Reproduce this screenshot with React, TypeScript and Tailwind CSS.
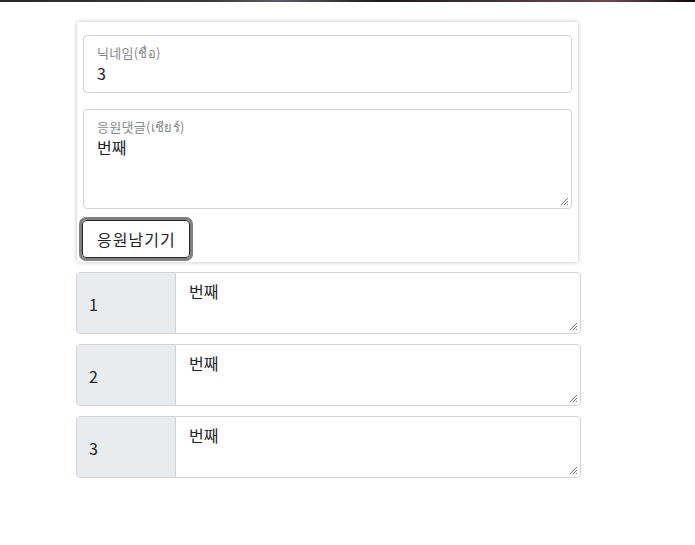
import React from 'react';

const rows = [
    { id: 1, text: '번째' },
    { id: 2, text: '번째' },
    { id: 3, text: '번째' },
];

const font = 'font-["Noto_Sans_CJK_KR","Noto_Sans",sans-serif]';

export default function App() {
    return (
        <div className={`w-[695px] h-[545px] bg-white text-[#212529] ${font}`}>
            <div className="h-[2px] w-full bg-[linear-gradient(90deg,#2b2a28,#3a3936_30%,#5a5e66_40%,#1d1b1a_55%,#4b3a3a_75%,#6a4a4c_88%,#0a0a0a)]" />

            <div className="pl-[77px] pt-[20px]">
                <div className="w-[501px] bg-white shadow-[0_0_4px_rgba(0,0,0,0.28)] pt-[13px] px-[6px] pb-[4px]">
                    <div className="h-[58px] border border-[#ced4da] rounded-[4px] px-[13px] pt-[8px]">
                        <div className="text-[13px] leading-[18px] text-[#838a90] tracking-[0.3px]">닉네임(ชื่อ)</div>
                        <div className="text-[16px] leading-[22px]">3</div>
                    </div>
                    <div className="mt-[16px] h-[100px] border border-[#ced4da] rounded-[4px] px-[13px] pt-[8px] relative">
                        <div className="text-[13px] leading-[18px] text-[#838a90] tracking-[0.3px]">응원댓글(เชียร์)</div>
                        <div className="text-[16px] leading-[22px]">번째</div>
                        <Grip />
                    </div>
                    <div className="mt-[11px] ml-[-1px]">
                        <button className="h-[38px] pl-[14px] pr-[13px] border border-[#212529] rounded-[4px] bg-white text-[16px] tracking-[1px] outline-[3px] outline-solid outline-[#808080] outline-offset-0 text-[#212529]">
                            응원남기기
                        </button>
                    </div>
                </div>
            </div>

            <div className="pl-[76px] pt-[10px] flex flex-col gap-[10px]">
                {rows.map(r => (
                    <div key={r.id} className="w-[505px] h-[62px] flex border border-[#ced4da] rounded-[4px] overflow-hidden">
                        <div className="w-[99px] bg-[#e9ecef] border-r border-[#ced4da] flex items-center pl-[12px] pt-[2px] text-[16px]">
                            {r.id}
                        </div>
                        <div className="flex-1 relative px-[13px] pt-[7px] text-[16px] leading-[22px]">
                            {r.text}
                            <Grip />
                        </div>
                    </div>
                ))}
            </div>
        </div>
    );
}

function Grip() {
    return (
        <svg className="absolute right-[2px] bottom-[2px]" width="9" height="9" viewBox="0 0 9 9">
            <path d="M8 1 L1 8 M8 4 L4 8 M8 7 L7 8" stroke="#777" strokeWidth="1" />
        </svg>
    );
}
